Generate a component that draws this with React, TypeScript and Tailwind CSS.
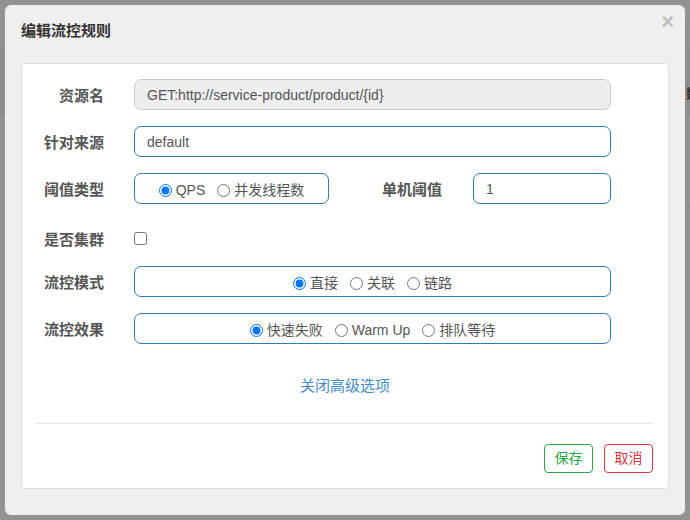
const font = "font-['Liberation_Sans','Noto_Sans_CJK_SC',sans-serif]";

type Opt = { label: string; checked?: boolean };

function RadioGroup({ name, options }: { name: string; options: Opt[] }) {
  return (
    <div className="flex items-center justify-center gap-3 pt-[3px] text-[14px] text-[#555]">
      {options.map((o) => (
        <label key={o.label} className="flex items-center gap-1">
          <input
            type="radio"
            name={name}
            defaultChecked={o.checked}
            className="m-0 h-[13px] w-[13px]"
          />
          <span className="leading-[20px]">{o.label}</span>
        </label>
      ))}
    </div>
  );
}

function Label({ children, w = "w-[82px]" }: { children: React.ReactNode; w?: string }) {
  return (
    <div className={`${w} shrink-0 pt-[3px] text-right text-[15px] font-bold leading-[20px] text-[#555]`}>
      {children}
    </div>
  );
}

export default function App() {
  return (
    <div className={`relative h-[520px] w-[690px] overflow-hidden bg-[#929292] ${font}`}>
      {/* page behind the dialog, dimmed */}
      <div className="flex flex-col">
        <div className="h-[20px] border-b border-[#888]" />
        <div className="h-[28px]" />
        <div className="flex h-[67px] items-center justify-end border-b border-[#888] bg-[#8e8e8e] text-[13px] font-bold text-[#333]">
          <span className="mr-[-9px] mt-[26px]">数</span>
        </div>
        <div className="h-[92px] border-b border-[#888]" />
      </div>

      {/* dialog */}
      <div className="absolute left-[5px] top-[5px] h-[510px] w-[680px] rounded-[6px] bg-[#efefef]">
        <div className="h-[58px] px-4 pt-[15px]">
          <h4 className="text-[15px] font-bold leading-[22px] text-[#333]">编辑流控规则</h4>
        </div>
        <button className="absolute right-[11px] top-[4px] text-[22px] font-bold leading-[26px] text-[#bdbdbd]">
          ×
        </button>

        <div className="ml-4 h-[426px] w-[648px] rounded-[4px] border border-[#dcdcdc] bg-white pt-[15px]">
          <div className="flex flex-col gap-4">
            <div className="flex h-[31px] items-center">
              <Label>资源名</Label>
              <div className="ml-[30px] flex h-[31px] w-[477px] items-center rounded-[7px] border border-[#ccc] bg-[#eee] px-3 pt-[1px] text-[14px] text-[#555]">
                GET:http://service-product/product/{"{id}"}
              </div>
            </div>

            <div className="flex h-[31px] items-center">
              <Label>针对来源</Label>
              <div className="ml-[30px] flex h-[31px] w-[477px] items-center rounded-[7px] border border-[#337ab7] px-3 pt-[1px] text-[14px] text-[#555]">
                default
              </div>
            </div>

            <div className="flex h-[31px] items-center">
              <Label>阈值类型</Label>
              <div className="ml-[30px] flex h-[31px] w-[195px] items-center justify-center rounded-[7px] border border-[#337ab7]">
                <RadioGroup name="grade" options={[{ label: "QPS", checked: true }, { label: "并发线程数" }]} />
              </div>
              <Label w="w-[113px]">单机阈值</Label>
              <div className="ml-[31px] flex h-[31px] w-[138px] items-center rounded-[7px] border border-[#337ab7] px-3 pt-[1px] text-[14px] text-[#555]">
                1
              </div>
            </div>

            <div className="flex h-[30px] items-center pt-[6px]">
              <Label>是否集群</Label>
              <input type="checkbox" className="m-0 ml-[30px] h-[13px] w-[13px]" />
            </div>

            <div className="flex h-[31px] items-center">
              <Label>流控模式</Label>
              <div className="ml-[30px] flex h-[31px] w-[477px] items-center justify-center rounded-[7px] border border-[#337ab7]">
                <RadioGroup
                  name="strategy"
                  options={[{ label: "直接", checked: true }, { label: "关联" }, { label: "链路" }]}
                />
              </div>
            </div>

            <div className="flex h-[31px] items-center">
              <Label>流控效果</Label>
              <div className="ml-[30px] flex h-[31px] w-[477px] items-center justify-center rounded-[7px] border border-[#337ab7]">
                <RadioGroup
                  name="behavior"
                  options={[{ label: "快速失败", checked: true }, { label: "Warm Up" }, { label: "排队等待" }]}
                />
              </div>
            </div>
          </div>

          <div className="mt-[32px] text-center text-[15px] leading-[20px] text-[#428bca]">
            <a href="#">关闭高级选项</a>
          </div>

          <div className="ml-[14px] mr-[15px] mt-[27px] border-t border-[#e5e5e5]" />

          <div className="mr-[15px] mt-[20px] flex justify-end gap-[11px]">
            <button className="h-[29px] w-[49px] rounded-[4px] border border-[#28a745] bg-white text-[14px] text-[#28a745]">
              保存
            </button>
            <button className="h-[29px] w-[49px] rounded-[4px] border border-[#dc3545] bg-white text-[14px] text-[#dc3545]">
              取消
            </button>
          </div>
        </div>
      </div>
    </div>
  );
}
